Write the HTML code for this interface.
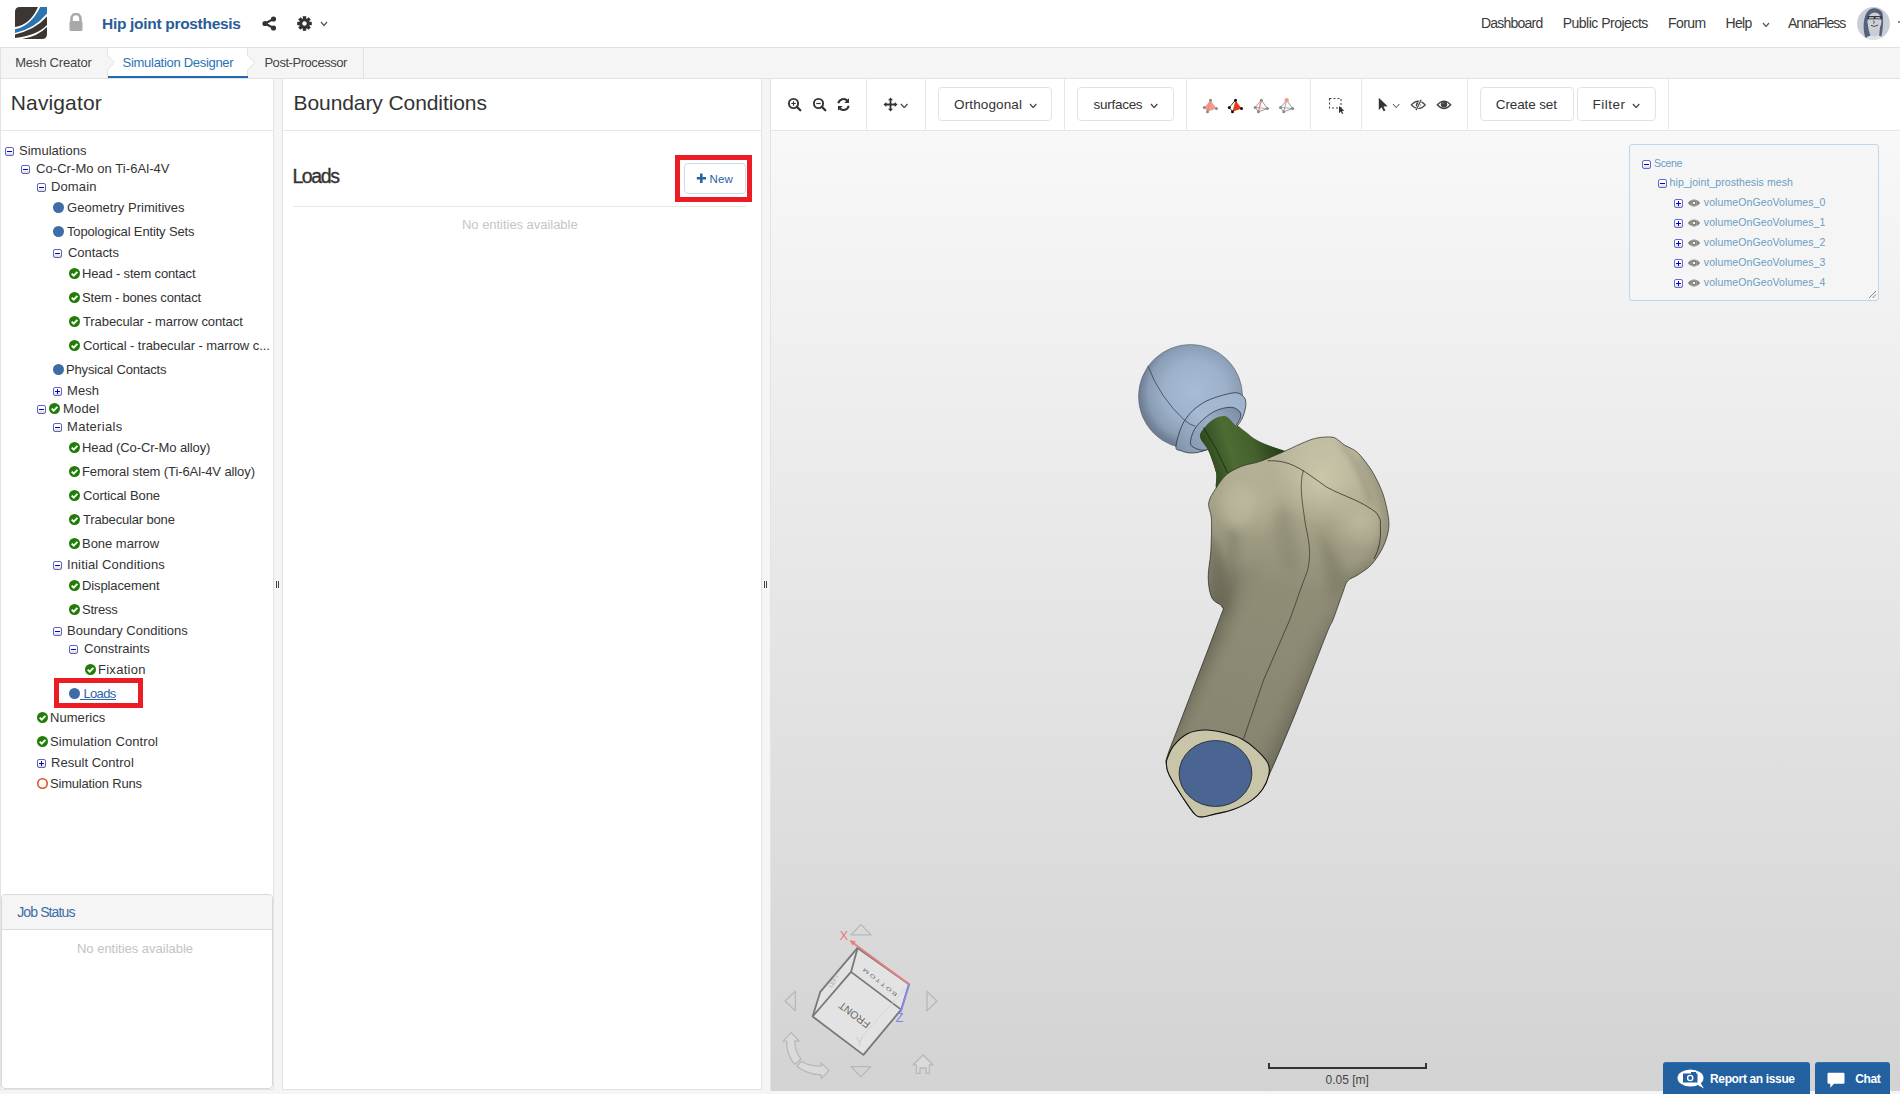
<!DOCTYPE html>
<html><head><meta charset="utf-8"><style>
*{box-sizing:border-box;margin:0;padding:0}
html,body{width:1900px;height:1094px;overflow:hidden;background:#f5f5f5;font-family:"Liberation Sans",sans-serif;color:#333}
.a{position:absolute}
.t{position:absolute;white-space:nowrap;line-height:1}
.tg{position:absolute;width:9px;height:9px;border:1px solid #5e68b2;border-radius:2px;background:linear-gradient(#fff,#fff 45%,#d8d8d8)}
.tg:after{content:"";position:absolute;left:1px;top:3px;width:5px;height:1px;background:#0000d0}
.tg.p:before{content:"";position:absolute;left:3px;top:1px;width:1px;height:5px;background:#0000d0}
.ci{position:absolute;width:11px;height:11px;border-radius:50%;background:#3d6ca6}
.ck{position:absolute;width:11px;height:11px}

</style></head><body>
<div class="a" style="left:0;top:0;width:1900px;height:47px;background:#fff"></div>
<div class="a" style="left:0;top:47px;width:1900px;height:1px;background:#e2e2e2"></div>
<svg class="a" style="left:15px;top:7px" width="32" height="32" viewBox="0 0 32 32">
<path d="M5 0 H32 V27 Q32 32 27 32 H0 V5 Q0 0 5 0 Z" fill="#fff"/>
<path d="M5 0 H23 Q15 18 0 20 V5 Q0 0 5 0 Z" fill="#3b3632"/>
<path d="M25.2 0 H32 V6.5 Q19 22 0 26 V22.2 Q16 19 25.2 0 Z" fill="#2b74b0"/>
<path d="M0 27.4 Q20 23 32 9.6 V18 Q22 28.5 0 31.1 Z" fill="#3b3632"/>
<path d="M7 32 Q22 30 32 20.1 V27 Q32 32 27 32 Z" fill="#3b3632"/>
</svg>
<svg class="a" style="left:68px;top:13px" width="16" height="19" viewBox="0 0 16 19">
<path d="M3.5 8 V5.5 A4.5 4.5 0 0 1 12.5 5.5 V8" fill="none" stroke="#a9a9a9" stroke-width="2.6"/>
<rect x="1.5" y="8" width="13" height="10" rx="1.5" fill="#a9a9a9"/></svg>
<div class="t" style="left:102.00px;top:15.88px;font-size:15.5px;color:#2a5c97;font-weight:700;letter-spacing:-0.305px;">Hip joint prosthesis</div>
<svg class="a" style="left:262px;top:16px" width="15" height="15" viewBox="0 0 15 15">
<line x1="3" y1="7.5" x2="11.5" y2="3" stroke="#333" stroke-width="2"/><line x1="3" y1="7.5" x2="11.5" y2="12" stroke="#333" stroke-width="2"/>
<circle cx="3" cy="7.5" r="2.6" fill="#333"/><circle cx="11.5" cy="3" r="2.6" fill="#333"/><circle cx="11.5" cy="12" r="2.6" fill="#333"/></svg>
<svg class="a" style="left:297px;top:16px" width="15" height="15" viewBox="-7.5 -7.5 15 15">
<g fill="#333"><rect x="-1.7" y="-7.3" width="3.4" height="4" transform="rotate(0)"/><rect x="-1.7" y="-7.3" width="3.4" height="4" transform="rotate(45)"/><rect x="-1.7" y="-7.3" width="3.4" height="4" transform="rotate(90)"/><rect x="-1.7" y="-7.3" width="3.4" height="4" transform="rotate(135)"/><rect x="-1.7" y="-7.3" width="3.4" height="4" transform="rotate(180)"/><rect x="-1.7" y="-7.3" width="3.4" height="4" transform="rotate(225)"/><rect x="-1.7" y="-7.3" width="3.4" height="4" transform="rotate(270)"/><rect x="-1.7" y="-7.3" width="3.4" height="4" transform="rotate(315)"/>
<circle r="5.3"/></g><circle r="2.2" fill="#fff"/></svg>
<svg class="a" style="left:320px;top:21px" width="8" height="5.5" viewBox="-1 -1 8 5.5"><path d="M0 0 L3.0 3.5 L6 0" fill="none" stroke="#555" stroke-width="1.2"/></svg>
<div class="t" style="left:1480.90px;top:15.75px;font-size:14px;color:#3a3a3a;letter-spacing:-0.763px;">Dashboard</div>
<div class="t" style="left:1562.70px;top:15.75px;font-size:14px;color:#3a3a3a;letter-spacing:-0.500px;">Public Projects</div>
<div class="t" style="left:1668.10px;top:15.75px;font-size:14px;color:#3a3a3a;letter-spacing:-0.575px;">Forum</div>
<div class="t" style="left:1725.60px;top:15.75px;font-size:14px;color:#3a3a3a;letter-spacing:-0.733px;">Help</div>
<div class="t" style="left:1788.00px;top:15.75px;font-size:14px;color:#3a3a3a;letter-spacing:-0.975px;">AnnaFless</div>
<svg class="a" style="left:1762px;top:21.5px" width="8" height="5.5" viewBox="-1 -1 8 5.5"><path d="M0 0 L3.0 3.5 L6 0" fill="none" stroke="#555" stroke-width="1.2"/></svg>
<svg class="a" style="left:1857px;top:7px" width="33" height="33" viewBox="0 0 33 33">
<defs><clipPath id="avc"><circle cx="16.5" cy="16.5" r="16.4"/></clipPath>
<filter id="avb"><feGaussianBlur stdDeviation="0.6"/></filter></defs>
<g clip-path="url(#avc)">
<rect width="33" height="33" fill="#c9cdd6"/>
<g filter="url(#avb)">
<path d="M9 33 C5 22 6 8 12 3 C16 0 22 1 25 5 C27 10 26 24 24 31 L22 30 C23 22 24 12 22 7 C17 4 12 7 11 13 C10 20 13 27 15 33 Z" fill="#52627a"/>
<ellipse cx="17.5" cy="14.5" rx="7" ry="9" fill="#d2cfd4"/>
<path d="M10.5 9 H25 V12.3 H10.5 Z" fill="#2e3a4c"/>
<rect x="12" y="10" width="4.6" height="1.5" fill="#b9b5bc"/><rect x="18.6" y="10" width="4.6" height="1.5" fill="#b9b5bc"/>
<path d="M16.5 13.5 L17.3 15.8 L16.2 16.5" stroke="#3a4658" stroke-width="0.9" fill="none"/>
<path d="M14 18.3 Q17.5 20.8 21 18" stroke="#3a4658" stroke-width="1" fill="none"/>
<path d="M8 33 C10 28 14 28 17.5 29.5 C21 28 25 28 27 33 Z" fill="#dfe2e8"/>
</g></g></svg>
<div class="a" style="left:1898px;top:21px;width:2px;height:2px;background:#888"></div>
<div class="a" style="left:0;top:48px;width:1900px;height:30px;background:#f5f5f5"></div>
<div class="a" style="left:0;top:78px;width:1900px;height:1px;background:#e2e2e2"></div>
<div class="a" style="left:0;top:48px;width:1px;height:31px;background:#e2e2e2"></div>
<svg class="a" style="left:0;top:48px" width="380" height="31" viewBox="0 0 380 31">
<path d="M107.5 0 H247.5 V7 L254.5 14.5 L247.5 22 V30 H107.5 V22 L114.5 14.5 L107.5 7 Z" fill="#fff"/>
<path d="M107.5 0 V7 L114.5 14.5 L107.5 22 V30" fill="none" stroke="#e4e4e4" stroke-width="1"/>
<path d="M247.5 0 V7 L254.5 14.5 L247.5 22 V30" fill="none" stroke="#e4e4e4" stroke-width="1"/>
<line x1="363.5" y1="0" x2="363.5" y2="30" stroke="#e2e2e2"/>
<rect x="108" y="28" width="140" height="2" fill="#1f6cb0"/>
</svg>
<div class="t" style="left:15.20px;top:56.00px;font-size:13px;color:#444;letter-spacing:-0.200px;">Mesh Creator</div>
<div class="t" style="left:122.60px;top:56.00px;font-size:13px;color:#2a72b6;letter-spacing:-0.294px;">Simulation Designer</div>
<div class="t" style="left:264.40px;top:56.00px;font-size:13px;color:#444;letter-spacing:-0.454px;">Post-Processor</div>
<div class="a" style="left:0;top:79px;width:274px;height:1011px;background:#fff;border:1px solid #e3e3e3;border-top:none"></div>
<div class="t" style="left:10.80px;top:92.22px;font-size:21px;color:#333;letter-spacing:0.125px;">Navigator</div>
<div class="a" style="left:1px;top:130px;width:272px;height:1px;background:#e6e6e6"></div>
<div class="tg" style="left:5px;top:147px"></div>
<div class="t" style="left:19.00px;top:144.00px;font-size:13px;color:#333;letter-spacing:0.020px;">Simulations</div>
<div class="tg" style="left:21px;top:165px"></div>
<div class="t" style="left:36.00px;top:162.00px;font-size:13px;color:#333;letter-spacing:0.065px;">Co-Cr-Mo on Ti-6Al-4V</div>
<div class="tg" style="left:37px;top:183px"></div>
<div class="t" style="left:51.00px;top:180.00px;font-size:13px;color:#333;letter-spacing:0.120px;">Domain</div>
<div class="ci" style="left:53px;top:202px"></div>
<div class="t" style="left:67.00px;top:201.00px;font-size:13px;color:#333;letter-spacing:0.033px;">Geometry Primitives</div>
<div class="ci" style="left:53px;top:226px"></div>
<div class="t" style="left:67.00px;top:225.00px;font-size:13px;color:#333;letter-spacing:-0.150px;">Topological Entity Sets</div>
<div class="tg" style="left:53px;top:249px"></div>
<div class="t" style="left:68.00px;top:246.00px;font-size:13px;color:#333;letter-spacing:-0.057px;">Contacts</div>
<svg class="ck" style="left:69px;top:268px" width="11" height="11" viewBox="0 0 11 11"><circle cx="5.5" cy="5.5" r="5.5" fill="#1f7d08"/><path d="M2.7 5.6 L4.7 7.6 L8.4 3.8" fill="none" stroke="#fff" stroke-width="1.9"/></svg>
<div class="t" style="left:82.00px;top:267.00px;font-size:13px;color:#333;letter-spacing:-0.156px;">Head - stem contact</div>
<svg class="ck" style="left:69px;top:292px" width="11" height="11" viewBox="0 0 11 11"><circle cx="5.5" cy="5.5" r="5.5" fill="#1f7d08"/><path d="M2.7 5.6 L4.7 7.6 L8.4 3.8" fill="none" stroke="#fff" stroke-width="1.9"/></svg>
<div class="t" style="left:82.00px;top:291.00px;font-size:13px;color:#333;letter-spacing:-0.200px;">Stem - bones contact</div>
<svg class="ck" style="left:69px;top:316px" width="11" height="11" viewBox="0 0 11 11"><circle cx="5.5" cy="5.5" r="5.5" fill="#1f7d08"/><path d="M2.7 5.6 L4.7 7.6 L8.4 3.8" fill="none" stroke="#fff" stroke-width="1.9"/></svg>
<div class="t" style="left:83.00px;top:315.00px;font-size:13px;color:#333;letter-spacing:-0.088px;">Trabecular - marrow contact</div>
<svg class="ck" style="left:69px;top:340px" width="11" height="11" viewBox="0 0 11 11"><circle cx="5.5" cy="5.5" r="5.5" fill="#1f7d08"/><path d="M2.7 5.6 L4.7 7.6 L8.4 3.8" fill="none" stroke="#fff" stroke-width="1.9"/></svg>
<div class="t" style="left:83.00px;top:339.00px;font-size:13px;color:#333;letter-spacing:-0.071px;">Cortical - trabecular - marrow c...</div>
<div class="ci" style="left:53px;top:364px"></div>
<div class="t" style="left:66.00px;top:363.00px;font-size:13px;color:#333;letter-spacing:-0.175px;">Physical Contacts</div>
<div class="tg p" style="left:53px;top:387px"></div>
<div class="t" style="left:67.00px;top:384.00px;font-size:13px;color:#333;letter-spacing:0.067px;">Mesh</div>
<div class="tg" style="left:37px;top:405px"></div>
<svg class="ck" style="left:49px;top:403px" width="11" height="11" viewBox="0 0 11 11"><circle cx="5.5" cy="5.5" r="5.5" fill="#1f7d08"/><path d="M2.7 5.6 L4.7 7.6 L8.4 3.8" fill="none" stroke="#fff" stroke-width="1.9"/></svg>
<div class="t" style="left:63.00px;top:402.00px;font-size:13px;color:#333;letter-spacing:0.175px;">Model</div>
<div class="tg" style="left:53px;top:423px"></div>
<div class="t" style="left:67.00px;top:420.00px;font-size:13px;color:#333;letter-spacing:0.300px;">Materials</div>
<svg class="ck" style="left:69px;top:442px" width="11" height="11" viewBox="0 0 11 11"><circle cx="5.5" cy="5.5" r="5.5" fill="#1f7d08"/><path d="M2.7 5.6 L4.7 7.6 L8.4 3.8" fill="none" stroke="#fff" stroke-width="1.9"/></svg>
<div class="t" style="left:82.00px;top:441.00px;font-size:13px;color:#333;letter-spacing:-0.120px;">Head (Co-Cr-Mo alloy)</div>
<svg class="ck" style="left:69px;top:466px" width="11" height="11" viewBox="0 0 11 11"><circle cx="5.5" cy="5.5" r="5.5" fill="#1f7d08"/><path d="M2.7 5.6 L4.7 7.6 L8.4 3.8" fill="none" stroke="#fff" stroke-width="1.9"/></svg>
<div class="t" style="left:82.00px;top:465.00px;font-size:13px;color:#333;letter-spacing:-0.097px;">Femoral stem (Ti-6Al-4V alloy)</div>
<svg class="ck" style="left:69px;top:490px" width="11" height="11" viewBox="0 0 11 11"><circle cx="5.5" cy="5.5" r="5.5" fill="#1f7d08"/><path d="M2.7 5.6 L4.7 7.6 L8.4 3.8" fill="none" stroke="#fff" stroke-width="1.9"/></svg>
<div class="t" style="left:83.00px;top:489.00px;font-size:13px;color:#333;letter-spacing:-0.083px;">Cortical Bone</div>
<svg class="ck" style="left:69px;top:514px" width="11" height="11" viewBox="0 0 11 11"><circle cx="5.5" cy="5.5" r="5.5" fill="#1f7d08"/><path d="M2.7 5.6 L4.7 7.6 L8.4 3.8" fill="none" stroke="#fff" stroke-width="1.9"/></svg>
<div class="t" style="left:83.00px;top:513.00px;font-size:13px;color:#333;letter-spacing:-0.164px;">Trabecular bone</div>
<svg class="ck" style="left:69px;top:538px" width="11" height="11" viewBox="0 0 11 11"><circle cx="5.5" cy="5.5" r="5.5" fill="#1f7d08"/><path d="M2.7 5.6 L4.7 7.6 L8.4 3.8" fill="none" stroke="#fff" stroke-width="1.9"/></svg>
<div class="t" style="left:82.00px;top:537.00px;font-size:13px;color:#333;letter-spacing:-0.020px;">Bone marrow</div>
<div class="tg" style="left:53px;top:561px"></div>
<div class="t" style="left:67.00px;top:558.00px;font-size:13px;color:#333;letter-spacing:0.141px;">Initial Conditions</div>
<svg class="ck" style="left:69px;top:580px" width="11" height="11" viewBox="0 0 11 11"><circle cx="5.5" cy="5.5" r="5.5" fill="#1f7d08"/><path d="M2.7 5.6 L4.7 7.6 L8.4 3.8" fill="none" stroke="#fff" stroke-width="1.9"/></svg>
<div class="t" style="left:82.00px;top:579.00px;font-size:13px;color:#333;letter-spacing:-0.109px;">Displacement</div>
<svg class="ck" style="left:69px;top:604px" width="11" height="11" viewBox="0 0 11 11"><circle cx="5.5" cy="5.5" r="5.5" fill="#1f7d08"/><path d="M2.7 5.6 L4.7 7.6 L8.4 3.8" fill="none" stroke="#fff" stroke-width="1.9"/></svg>
<div class="t" style="left:82.00px;top:603.00px;font-size:13px;color:#333;letter-spacing:-0.240px;">Stress</div>
<div class="tg" style="left:53px;top:627px"></div>
<div class="t" style="left:67.00px;top:624.00px;font-size:13px;color:#333;letter-spacing:0.006px;">Boundary Conditions</div>
<div class="tg" style="left:69px;top:645px"></div>
<div class="t" style="left:84.00px;top:642.00px;font-size:13px;color:#333;letter-spacing:-0.010px;">Constraints</div>
<svg class="ck" style="left:85px;top:664px" width="11" height="11" viewBox="0 0 11 11"><circle cx="5.5" cy="5.5" r="5.5" fill="#1f7d08"/><path d="M2.7 5.6 L4.7 7.6 L8.4 3.8" fill="none" stroke="#fff" stroke-width="1.9"/></svg>
<div class="t" style="left:98.00px;top:663.00px;font-size:13px;color:#333;letter-spacing:0.271px;">Fixation</div>
<div class="ci" style="left:69px;top:688px"></div>
<div class="t" style="left:83.40px;top:687.00px;font-size:13px;color:#2e62a8;letter-spacing:-0.625px;">Loads</div>
<div class="a" style="left:80px;top:699px;width:36px;height:1px;background:#2e62a8"></div>
<svg class="ck" style="left:37px;top:712px" width="11" height="11" viewBox="0 0 11 11"><circle cx="5.5" cy="5.5" r="5.5" fill="#1f7d08"/><path d="M2.7 5.6 L4.7 7.6 L8.4 3.8" fill="none" stroke="#fff" stroke-width="1.9"/></svg>
<div class="t" style="left:50.00px;top:711.00px;font-size:13px;color:#333;letter-spacing:0.057px;">Numerics</div>
<svg class="ck" style="left:37px;top:736px" width="11" height="11" viewBox="0 0 11 11"><circle cx="5.5" cy="5.5" r="5.5" fill="#1f7d08"/><path d="M2.7 5.6 L4.7 7.6 L8.4 3.8" fill="none" stroke="#fff" stroke-width="1.9"/></svg>
<div class="t" style="left:50.00px;top:735.00px;font-size:13px;color:#333;letter-spacing:0.100px;">Simulation Control</div>
<div class="tg p" style="left:37px;top:759px"></div>
<div class="t" style="left:51.00px;top:756.00px;font-size:13px;color:#333;letter-spacing:0.031px;">Result Control</div>
<svg class="a" style="left:37px;top:778px" width="11" height="11" viewBox="0 0 11 11"><circle cx="5.5" cy="5.5" r="4.7" fill="none" stroke="#d9541e" stroke-width="1.6"/></svg>
<div class="t" style="left:50.00px;top:777.00px;font-size:13px;color:#333;letter-spacing:-0.193px;">Simulation Runs</div>
<div class="a" style="left:54px;top:678px;width:89px;height:30px;border:5px solid #ec1c24"></div>
<div class="a" style="left:276px;top:581px;width:1px;height:7px;background:#444"></div>
<div class="a" style="left:278px;top:581px;width:1px;height:7px;background:#444"></div>
<div class="a" style="left:1px;top:894px;width:272px;height:195px;border:1px solid #dadada;border-radius:4px;background:#fff;overflow:hidden"><div style="height:35px;background:#f5f5f5;border-bottom:1px solid #dadada"></div></div>
<div class="t" style="left:17.20px;top:905.15px;font-size:14px;color:#3b6ea6;letter-spacing:-0.878px;">Job Status</div>
<div class="t" style="left:77.00px;top:942.00px;font-size:13px;color:#c3c3c3;letter-spacing:-0.015px;">No entities available</div>
<div class="a" style="left:282px;top:79px;width:480px;height:1011px;background:#fff;border:1px solid #e3e3e3;border-top:none"></div>
<div class="t" style="left:293.60px;top:91.62px;font-size:21px;color:#333;letter-spacing:-0.089px;">Boundary Conditions</div>
<div class="a" style="left:283px;top:130px;width:478px;height:1px;background:#e6e6e6"></div>
<div class="t" style="left:292.40px;top:167.49px;font-size:19.5px;color:#333;letter-spacing:-1.375px;-webkit-text-stroke:0.35px #333;">Loads</div>
<div class="a" style="left:293px;top:206px;width:453px;height:1px;background:#e8e8e8"></div>
<div class="a" style="left:675px;top:155px;width:77px;height:47px;border:5px solid #ec1c24"></div>
<div class="a" style="left:684px;top:163px;width:62px;height:31px;border:1px solid #c6dcec;border-radius:4px;background:#fff"></div>
<svg class="a" style="left:696px;top:173px" width="11" height="11" viewBox="0 0 11 11"><path d="M5.3 0.5 V10 M0.8 5.2 H10" stroke="#2d62a3" stroke-width="2.6"/></svg>
<div class="t" style="left:709.60px;top:174.27px;font-size:11.5px;color:#2d62a3;letter-spacing:0.150px;">New</div>
<div class="t" style="left:462.00px;top:218.00px;font-size:13px;color:#c6c6c6;letter-spacing:-0.035px;">No entities available</div>
<div class="a" style="left:764px;top:581px;width:1px;height:7px;background:#444"></div>
<div class="a" style="left:766px;top:581px;width:1px;height:7px;background:#444"></div>
<div class="a" style="left:770px;top:79px;width:1130px;height:52px;background:#fff;border-left:1px solid #e3e3e3;border-bottom:1px solid #e6e6e6"></div>
<div class="a" style="left:770px;top:131px;width:1px;height:960px;background:#e3e3e3"></div>
<div class="a" style="left:771px;top:131px;width:1129px;height:960px;background:linear-gradient(#f8f8f8,#d3d3d3)"></div>
<div class="a" style="left:866px;top:79px;width:1px;height:51px;background:#e8e8e8"></div>
<div class="a" style="left:925px;top:79px;width:1px;height:51px;background:#e8e8e8"></div>
<div class="a" style="left:1064px;top:79px;width:1px;height:51px;background:#e8e8e8"></div>
<div class="a" style="left:1186px;top:79px;width:1px;height:51px;background:#e8e8e8"></div>
<div class="a" style="left:1310px;top:79px;width:1px;height:51px;background:#e8e8e8"></div>
<div class="a" style="left:1361px;top:79px;width:1px;height:51px;background:#e8e8e8"></div>
<div class="a" style="left:1467px;top:79px;width:1px;height:51px;background:#e8e8e8"></div>
<div class="a" style="left:1668px;top:79px;width:1px;height:51px;background:#e8e8e8"></div>
<svg class="a" style="left:787px;top:97px" width="16" height="16" viewBox="0 0 16 16">
<circle cx="6.5" cy="6.5" r="4.6" fill="none" stroke="#333" stroke-width="1.9"/><path d="M9.8 9.8 L13.3 13.3" stroke="#333" stroke-width="2.3" stroke-linecap="round"/>
<path d="M4.3 6.5 H8.7 M6.5 4.3 V8.7" stroke="#333" stroke-width="1.2"/></svg>
<svg class="a" style="left:811.5px;top:97px" width="16" height="16" viewBox="0 0 16 16">
<circle cx="6.5" cy="6.5" r="4.6" fill="none" stroke="#333" stroke-width="1.9"/><path d="M9.8 9.8 L13.3 13.3" stroke="#333" stroke-width="2.3" stroke-linecap="round"/>
<path d="M4.3 6.5 H8.7" stroke="#333" stroke-width="1.2"/></svg>
<svg class="a" style="left:836px;top:97px" width="15" height="15" viewBox="0 0 15 15">
<path d="M2.3 6.3 A5.3 5.3 0 0 1 11.6 4" fill="none" stroke="#333" stroke-width="2"/><path d="M13 1.3 V6 H8.3 Z" fill="#333"/>
<path d="M12.7 8.7 A5.3 5.3 0 0 1 3.4 11" fill="none" stroke="#333" stroke-width="2"/><path d="M2 13.7 V9 H6.7 Z" fill="#333"/></svg>
<svg class="a" style="left:883px;top:97px" width="15" height="15" viewBox="0 0 15 15">
<path d="M7.5 2 V13 M2 7.5 H13" stroke="#333" stroke-width="1.8"/>
<path d="M7.5 0.5 L10 3.3 H5 Z M7.5 14.5 L10 11.7 H5 Z M0.5 7.5 L3.3 5 V10 Z M14.5 7.5 L11.7 5 V10 Z" fill="#333"/></svg>
<svg class="a" style="left:900px;top:102.5px" width="8.5" height="5.6" viewBox="-1 -1 8.5 5.6"><path d="M0 0 L3.25 3.6 L6.5 0" fill="none" stroke="#444" stroke-width="1.3"/></svg>
<div class="a" style="left:938px;top:87px;width:114px;height:34px;border:1px solid #e2e2e2;border-radius:4px;background:#fff"></div>
<div class="t" style="left:954.00px;top:97.57px;font-size:13.5px;color:#333;letter-spacing:0.133px;">Orthogonal</div>
<svg class="a" style="left:1029px;top:102.8px" width="8.3" height="5.6" viewBox="-1 -1 8.3 5.6"><path d="M0 0 L3.15 3.6 L6.3 0" fill="none" stroke="#444" stroke-width="1.3"/></svg>
<div class="a" style="left:1077px;top:87px;width:97px;height:34px;border:1px solid #e2e2e2;border-radius:4px;background:#fff"></div>
<div class="t" style="left:1093.60px;top:97.57px;font-size:13.5px;color:#333;letter-spacing:-0.286px;">surfaces</div>
<svg class="a" style="left:1150px;top:102.8px" width="8.3" height="5.6" viewBox="-1 -1 8.3 5.6"><path d="M0 0 L3.15 3.6 L6.3 0" fill="none" stroke="#444" stroke-width="1.3"/></svg>
<div class="a" style="left:1480px;top:87px;width:94px;height:34px;border:1px solid #e2e2e2;border-radius:4px;background:#fff"></div>
<div class="t" style="left:1495.80px;top:97.57px;font-size:13.5px;color:#333;letter-spacing:-0.122px;">Create set</div>
<div class="a" style="left:1577px;top:87px;width:79px;height:34px;border:1px solid #e2e2e2;border-radius:4px;background:#fff"></div>
<div class="t" style="left:1592.40px;top:97.57px;font-size:13.5px;color:#333;letter-spacing:0.520px;">Filter</div>
<svg class="a" style="left:1631.5px;top:102.8px" width="8.3" height="5.6" viewBox="-1 -1 8.3 5.6"><path d="M0 0 L3.15 3.6 L6.3 0" fill="none" stroke="#444" stroke-width="1.3"/></svg>
<svg class="a" style="left:0;top:0;overflow:visible" width="1" height="1"><polygon points="1210.5,100.2 1204.3,107.5 1207.5,111.7 1216.5,108.6" fill="#f29a8e"/><line x1="1210.5" y1="100.2" x2="1207.5" y2="111.7" stroke="#d77" stroke-width="0.6"/><circle cx="1210.5" cy="100.2" r="1.5" fill="#8a8a8a"/><circle cx="1204.3" cy="107.5" r="1.5" fill="#8a8a8a"/><circle cx="1207.5" cy="111.7" r="1.5" fill="#8a8a8a"/><circle cx="1216.5" cy="108.6" r="1.5" fill="#8a8a8a"/></svg>
<svg class="a" style="left:0;top:0;overflow:visible" width="1" height="1"><polygon points="1235.5,100.2 1232.5,111.7 1241.5,108.6" fill="#e8391a"/><polyline points="1235.5,100.2 1229.3,107.5 1232.5,111.7" fill="none" stroke="#111" stroke-width="0.8"/><circle cx="1235.5" cy="100.2" r="1.5" fill="#111"/><circle cx="1229.3" cy="107.5" r="1.5" fill="#111"/><circle cx="1232.5" cy="111.7" r="1.5" fill="#111"/><circle cx="1241.5" cy="108.6" r="1.5" fill="#111"/></svg>
<svg class="a" style="left:0;top:0;overflow:visible" width="1" height="1"><polygon points="1261.4,100.2 1255.2,107.5 1258.4,111.7 1267.4,108.6" fill="none" stroke="#555" stroke-width="0.6"/><line x1="1255.2" y1="107.5" x2="1267.4" y2="108.6" stroke="#555" stroke-width="0.5"/><line x1="1261.4" y1="100.2" x2="1258.4" y2="111.7" stroke="#f08070" stroke-width="1.3"/><circle cx="1261.4" cy="100.2" r="1.5" fill="#8a8a8a"/><circle cx="1255.2" cy="107.5" r="1.5" fill="#8a8a8a"/><circle cx="1258.4" cy="111.7" r="1.5" fill="#8a8a8a"/><circle cx="1267.4" cy="108.6" r="1.5" fill="#8a8a8a"/></svg>
<svg class="a" style="left:0;top:0;overflow:visible" width="1" height="1"><polygon points="1286.7,100.2 1280.5,107.5 1283.7,111.7 1292.7,108.6" fill="none" stroke="#555" stroke-width="0.6"/><line x1="1280.5" y1="107.5" x2="1292.7" y2="108.6" stroke="#555" stroke-width="0.5"/><line x1="1286.7" y1="100.2" x2="1283.7" y2="111.7" stroke="#555" stroke-width="0.5"/><circle cx="1286.7" cy="100.2" r="2.1" fill="#f29a8e"/><circle cx="1280.5" cy="107.5" r="1.5" fill="#8a8a8a"/><circle cx="1283.7" cy="111.7" r="1.5" fill="#8a8a8a"/><circle cx="1292.7" cy="108.6" r="1.5" fill="#8a8a8a"/></svg>
<svg class="a" style="left:1328px;top:97px" width="18" height="18" viewBox="0 0 18 18">
<rect x="1.5" y="1.5" width="11.5" height="9.5" fill="none" stroke="#444" stroke-width="1.1" stroke-dasharray="2 2"/>
<path d="M11 9 L11 16.3 L12.8 14.6 L14 17 L15.2 16.4 L14 14 L16.4 13.8 Z" fill="#333"/></svg>
<svg class="a" style="left:1378px;top:97px" width="11" height="15" viewBox="0 0 11 15">
<path d="M0.8 0.8 L0.8 13 L3.6 10.3 L5.6 14.3 L7.4 13.4 L5.4 9.5 L9.6 9.3 Z" fill="#333"/></svg>
<svg class="a" style="left:1392px;top:102.8px" width="8.3" height="5.6" viewBox="-1 -1 8.3 5.6"><path d="M0 0 L3.15 3.6 L6.3 0" fill="none" stroke="#444" stroke-width="1.0"/></svg>
<svg class="a" style="left:1410px;top:99px" width="17" height="12" viewBox="0 0 17 12">
<path d="M1.3 5.8 Q8.3 -1.6 15.3 5.8 Q8.3 13.2 1.3 5.8 Z" fill="none" stroke="#444" stroke-width="1.2"/>
<path d="M8.6 3 A3 3 0 0 0 7.2 8.6 Z" fill="#444"/>
<path d="M9.6 7.2 A2 2 0 0 0 10.6 5.4" fill="none" stroke="#444" stroke-width="0.8"/>
<path d="M6.2 11 L11.2 0.8" stroke="#fff" stroke-width="2.4"/><path d="M6 11.2 L11.2 0.8" stroke="#444" stroke-width="1.2"/></svg>
<svg class="a" style="left:1436px;top:99px" width="16" height="12" viewBox="0 0 16 12">
<path d="M1.3 5.8 Q8 -1.6 14.7 5.8 Q8 13.2 1.3 5.8 Z" fill="none" stroke="#444" stroke-width="1.3"/>
<circle cx="8" cy="5.3" r="3.2" fill="#444"/><circle cx="7" cy="4.3" r="0.8" fill="#888"/></svg>
<div class="a" style="left:1629px;top:144px;width:250px;height:157px;border:1px solid #bcd8ea;border-radius:3px;background:rgba(245,245,245,0.9)"></div>
<svg class="a" style="left:1868px;top:290px" width="9" height="9" viewBox="0 0 9 9"><path d="M1 8 L8 1 M4.5 8 L8 4.5" stroke="#777" stroke-width="0.9"/></svg>
<div class="tg" style="left:1642px;top:160px;border-color:#6a6ac8"></div>
<div class="t" style="left:1654.00px;top:157.51px;font-size:10.5px;color:#6a9dc4;letter-spacing:-0.350px;">Scene</div>
<div class="tg" style="left:1658px;top:179px;border-color:#6a6ac8"></div>
<div class="t" style="left:1669.60px;top:176.51px;font-size:10.5px;color:#6a9dc4;letter-spacing:0.075px;">hip_joint_prosthesis mesh</div>
<div class="tg p" style="left:1674px;top:199px;border-color:#6a6ac8"></div>
<svg class="a" style="left:1688px;top:199px" width="12" height="8" viewBox="0 0 12 8"><path d="M0 4 C3 -0.6 9 -0.6 12 4 C9 8.6 3 8.6 0 4 Z" fill="#7a7a74"/><circle cx="6" cy="4" r="3.2" fill="none" stroke="#cfcfcf" stroke-width="0.6"/><circle cx="6" cy="4" r="1.3" fill="#f4f4f4"/></svg>
<div class="t" style="left:1703.80px;top:196.81px;font-size:10.5px;color:#6a9dc4;letter-spacing:0.100px;">volumeOnGeoVolumes_0</div>
<div class="tg p" style="left:1674px;top:219px;border-color:#6a6ac8"></div>
<svg class="a" style="left:1688px;top:219px" width="12" height="8" viewBox="0 0 12 8"><path d="M0 4 C3 -0.6 9 -0.6 12 4 C9 8.6 3 8.6 0 4 Z" fill="#7a7a74"/><circle cx="6" cy="4" r="3.2" fill="none" stroke="#cfcfcf" stroke-width="0.6"/><circle cx="6" cy="4" r="1.3" fill="#f4f4f4"/></svg>
<div class="t" style="left:1703.80px;top:216.81px;font-size:10.5px;color:#6a9dc4;letter-spacing:0.100px;">volumeOnGeoVolumes_1</div>
<div class="tg p" style="left:1674px;top:239px;border-color:#6a6ac8"></div>
<svg class="a" style="left:1688px;top:239px" width="12" height="8" viewBox="0 0 12 8"><path d="M0 4 C3 -0.6 9 -0.6 12 4 C9 8.6 3 8.6 0 4 Z" fill="#7a7a74"/><circle cx="6" cy="4" r="3.2" fill="none" stroke="#cfcfcf" stroke-width="0.6"/><circle cx="6" cy="4" r="1.3" fill="#f4f4f4"/></svg>
<div class="t" style="left:1703.80px;top:236.81px;font-size:10.5px;color:#6a9dc4;letter-spacing:0.100px;">volumeOnGeoVolumes_2</div>
<div class="tg p" style="left:1674px;top:259px;border-color:#6a6ac8"></div>
<svg class="a" style="left:1688px;top:259px" width="12" height="8" viewBox="0 0 12 8"><path d="M0 4 C3 -0.6 9 -0.6 12 4 C9 8.6 3 8.6 0 4 Z" fill="#7a7a74"/><circle cx="6" cy="4" r="3.2" fill="none" stroke="#cfcfcf" stroke-width="0.6"/><circle cx="6" cy="4" r="1.3" fill="#f4f4f4"/></svg>
<div class="t" style="left:1703.80px;top:256.81px;font-size:10.5px;color:#6a9dc4;letter-spacing:0.100px;">volumeOnGeoVolumes_3</div>
<div class="tg p" style="left:1674px;top:279px;border-color:#6a6ac8"></div>
<svg class="a" style="left:1688px;top:279px" width="12" height="8" viewBox="0 0 12 8"><path d="M0 4 C3 -0.6 9 -0.6 12 4 C9 8.6 3 8.6 0 4 Z" fill="#7a7a74"/><circle cx="6" cy="4" r="3.2" fill="none" stroke="#cfcfcf" stroke-width="0.6"/><circle cx="6" cy="4" r="1.3" fill="#f4f4f4"/></svg>
<div class="t" style="left:1703.80px;top:276.81px;font-size:10.5px;color:#6a9dc4;letter-spacing:0.100px;">volumeOnGeoVolumes_4</div>
<div class="a" style="left:1268px;top:1067px;width:159px;height:2px;background:#333"></div>
<div class="a" style="left:1268px;top:1063px;width:2px;height:6px;background:#333"></div>
<div class="a" style="left:1425px;top:1063px;width:2px;height:6px;background:#333"></div>
<div class="t" style="left:1325.60px;top:1074.44px;font-size:12px;color:#444;">0.05 [m]</div>
<div class="a" style="left:770px;top:1091px;width:1130px;height:3px;background:#f5f5f5"></div>
<div class="a" style="left:1663px;top:1062px;width:147px;height:32px;background:#22609f;border-radius:3px 3px 0 0;border-top:1px solid #2b70bf"></div>
<div class="a" style="left:1815px;top:1062px;width:75px;height:32px;background:#22609f;border-radius:3px 3px 0 0;border-top:1px solid #2b70bf"></div>
<svg class="a" style="left:1677px;top:1069px" width="29" height="20" viewBox="0 0 29 20">
<ellipse cx="13.5" cy="9" rx="13" ry="8.6" fill="#fff"/><path d="M19 15 L27 19.5 L23 13 Z" fill="#fff"/>
<rect x="6" y="4.5" width="14.5" height="9" fill="#22609f"/><rect x="14" y="3" width="5" height="2" fill="#22609f"/>
<circle cx="13.2" cy="9" r="2.6" fill="none" stroke="#fff" stroke-width="1.4"/></svg>
<div class="t" style="left:1710.00px;top:1073.24px;font-size:12px;color:#fff;font-weight:700;letter-spacing:-0.357px;">Report an issue</div>
<svg class="a" style="left:1827px;top:1072px" width="19" height="17" viewBox="0 0 19 17">
<path d="M1.5 0.8 H16.3 Q17.5 0.8 17.5 2 V10.5 Q17.5 11.7 16.3 11.7 H7 L3.3 15.8 V11.7 H1.5 Q0.5 11.7 0.5 10.5 V2 Q0.5 0.8 1.5 0.8 Z" fill="#fff"/></svg>
<div class="t" style="left:1855.20px;top:1073.24px;font-size:12px;color:#fff;font-weight:700;letter-spacing:-0.367px;">Chat</div>
<svg class="a" style="left:1120px;top:320px" width="290" height="510" viewBox="1120 320 290 510">
<defs>
<radialGradient id="sph" cx="1195" cy="392" r="55" gradientUnits="userSpaceOnUse">
<stop offset="0" stop-color="#a6bbd6"/><stop offset="0.55" stop-color="#9db1cb"/><stop offset="0.85" stop-color="#8a9db5"/><stop offset="1" stop-color="#6f8096"/></radialGradient>
<linearGradient id="neckg" x1="1205" y1="450" x2="1270" y2="430" gradientUnits="userSpaceOnUse">
<stop offset="0" stop-color="#2f4a1f"/><stop offset="0.35" stop-color="#4d6c33"/><stop offset="0.7" stop-color="#44602c"/><stop offset="1" stop-color="#2c421c"/></linearGradient>
<linearGradient id="boneg" x1="1300" y1="440" x2="1230" y2="760" gradientUnits="userSpaceOnUse">
<stop offset="0" stop-color="#bfbba0"/><stop offset="0.2" stop-color="#aaa68c"/><stop offset="0.45" stop-color="#8f8d76"/><stop offset="1" stop-color="#878570"/></linearGradient>
<filter id="bl4" filterUnits="userSpaceOnUse" x="1120" y="320" width="290" height="510"><feGaussianBlur stdDeviation="5"/></filter>
<filter id="bl3" filterUnits="userSpaceOnUse" x="1120" y="320" width="290" height="510"><feGaussianBlur stdDeviation="3"/></filter>
<linearGradient id="shaftside" x1="1186" y1="690" x2="1292" y2="739" gradientUnits="userSpaceOnUse">
<stop offset="0" stop-color="#5a584a" stop-opacity="0.75"/><stop offset="0.2" stop-color="#7d7b66" stop-opacity="0"/><stop offset="0.7" stop-color="#8d8b75" stop-opacity="0"/><stop offset="1" stop-color="#5a584a" stop-opacity="0.8"/></linearGradient>
<linearGradient id="collar" x1="1178" y1="448" x2="1240" y2="396" gradientUnits="userSpaceOnUse"><stop offset="0" stop-color="#8094ac"/><stop offset="0.45" stop-color="#a6bad3"/><stop offset="1" stop-color="#9fb3cc"/></linearGradient>
<linearGradient id="recess" x1="1195" y1="447" x2="1238" y2="410" gradientUnits="userSpaceOnUse"><stop offset="0" stop-color="#8a9db5"/><stop offset="0.5" stop-color="#9aaec7"/><stop offset="1" stop-color="#7b8ea6"/></linearGradient>
<radialGradient id="hl1" cx="1322" cy="478" r="48" gradientUnits="userSpaceOnUse"><stop offset="0" stop-color="#cdc9ad" stop-opacity="0.9"/><stop offset="1" stop-color="#cdc9ad" stop-opacity="0"/></radialGradient>
<radialGradient id="hl2" cx="1250" cy="500" r="40" gradientUnits="userSpaceOnUse"><stop offset="0" stop-color="#bbb79c" stop-opacity="0.8"/><stop offset="1" stop-color="#bbb79c" stop-opacity="0"/></radialGradient>
<radialGradient id="hl3" cx="1360" cy="520" r="30" gradientUnits="userSpaceOnUse"><stop offset="0" stop-color="#c0bca1" stop-opacity="0.8"/><stop offset="1" stop-color="#c0bca1" stop-opacity="0"/></radialGradient>
<clipPath id="sclip"><path d="M1225,560 L1345,590 L1269,776 L1160,760 Z"/></clipPath>
<linearGradient id="sfade" x1="0" y1="560" x2="0" y2="640" gradientUnits="userSpaceOnUse"><stop offset="0" stop-color="#fff" stop-opacity="0"/><stop offset="1" stop-color="#fff" stop-opacity="1"/></linearGradient>
<mask id="smask" maskUnits="userSpaceOnUse" x="1120" y="320" width="290" height="510"><rect x="1120" y="320" width="290" height="510" fill="url(#sfade)"/></mask>
<clipPath id="bclip"><path d="M1208.7,502.9 C1209.5,497.6 1213.0,492.9 1216.0,488.2 C1219.0,483.5 1222.2,478.2 1226.6,474.5 C1231.0,470.8 1236.8,468.2 1242.4,466.0 C1248.0,463.8 1253.3,463.8 1260.3,461.3 C1267.3,458.9 1277.8,454.2 1284.5,451.3 C1291.2,448.4 1295.0,446.2 1300.3,444.0 C1305.5,441.8 1310.8,439.3 1316.0,438.2 C1321.2,437.1 1327.9,436.7 1331.8,437.1 C1335.7,437.5 1337.1,439.5 1339.2,440.8 C1341.3,442.1 1341.7,443.2 1344.5,445.0 C1347.3,446.8 1352.5,448.5 1356.0,451.3 C1359.5,454.1 1362.5,457.9 1365.5,461.8 C1368.5,465.7 1371.2,469.4 1374.0,474.5 C1376.8,479.6 1380.1,486.1 1382.4,492.4 C1384.7,498.7 1386.5,506.4 1387.6,512.4 C1388.6,518.4 1389.4,522.8 1388.7,528.4 C1388.0,534.0 1386.2,540.3 1383.4,546.3 C1380.6,552.3 1376.0,559.5 1371.8,564.2 C1367.6,568.9 1362.2,571.9 1358.2,574.7 C1354.2,577.5 1350.2,577.8 1347.6,581.0 C1345.0,584.2 1344.9,587.2 1342.4,593.7 C1340.0,600.2 1335.5,613.4 1332.9,620.0 C1330.3,626.6 1332.7,618.7 1326.7,633.6 C1320.7,648.5 1304.8,690.0 1297.0,709.4 C1289.2,728.8 1284.6,739.3 1280.0,750.2 C1275.4,761.1 1272.1,768.2 1269.2,774.8 C1266.3,781.3 1265.4,785.2 1262.4,789.5 C1259.4,793.8 1256.3,797.0 1251.4,800.4 C1246.5,803.8 1239.2,807.3 1233.1,809.6 C1227.0,811.9 1220.0,812.9 1214.8,814.1 C1209.6,815.3 1205.3,816.9 1202.0,816.9 C1198.7,816.9 1197.9,817.3 1194.7,814.1 C1191.5,810.9 1187.2,804.2 1182.9,797.7 C1178.6,791.2 1171.8,780.4 1169.1,774.8 C1166.3,769.2 1166.7,767.0 1166.4,763.9 C1166.1,760.8 1164.9,763.3 1167.3,756.0 C1169.7,748.7 1172.3,742.7 1181.0,720.0 C1189.7,697.3 1212.3,638.8 1219.2,620.0 C1226.1,601.2 1223.6,611.1 1222.4,607.4 C1221.2,603.7 1214.4,602.9 1212.0,598.0 C1209.6,593.1 1208.4,585.6 1208.2,577.9 C1208.0,570.2 1210.2,561.2 1210.8,551.6 C1211.3,542.0 1211.8,528.1 1211.5,520.0 C1211.2,511.9 1208.0,508.2 1208.7,502.9 Z"/></clipPath>
</defs>
<path d="M1200.3,433.0 C1200.9,437.6 1206.1,444.7 1208.7,451.3 C1211.3,457.9 1214.1,465.6 1216.0,472.4 C1217.9,479.2 1212.3,491.4 1220.0,492.0 C1227.7,492.6 1250.0,481.7 1262.0,476.0 C1274.0,470.3 1292.6,463.9 1292.0,458.0 C1291.4,452.1 1265.9,445.1 1258.2,440.8 C1250.5,436.5 1249.5,434.6 1246.0,432.0 C1242.5,429.4 1241.0,428.0 1237.0,425.0 C1233.0,422.0 1227.3,414.2 1222.0,414.0 C1216.7,413.8 1208.6,420.8 1205.0,424.0 C1201.4,427.2 1199.7,428.4 1200.3,433.0 Z" fill="url(#neckg)"/>
<path d="M1203.4,427 Q1218,450 1227.6,473" fill="none" stroke="#1a2412" stroke-width="0.7"/>
<circle cx="1190.5" cy="396.5" r="52" fill="url(#sph)" stroke="#55606e" stroke-width="0.6"/>
<path d="M1176.0,446.0 C1176.6,440.9 1180.1,427.6 1184.7,420.4 C1189.3,413.1 1195.8,407.1 1203.7,402.5 C1211.6,397.9 1225.7,394.1 1232.2,393.0 C1238.7,391.9 1240.6,394.2 1242.9,396.0 C1245.2,397.8 1245.9,400.2 1245.9,403.7 C1245.9,407.2 1244.4,413.0 1242.9,416.8 C1241.4,420.6 1240.0,422.4 1237.0,426.3 C1234.0,430.2 1230.2,436.1 1225.0,440.0 C1219.8,443.9 1211.5,447.8 1206.0,450.0 C1200.5,452.2 1196.0,452.9 1191.8,453.0 C1187.6,453.1 1183.6,451.9 1181.0,450.7 C1178.4,449.5 1175.4,451.1 1176.0,446.0 Z" fill="url(#collar)" stroke="#222" stroke-width="0.7"/>
<path d="M1190.6,440.6 C1191.2,437.2 1192.7,431.1 1196.5,426.3 C1200.3,421.5 1207.5,415.2 1213.2,412.0 C1219.0,408.8 1226.5,407.1 1231.0,407.3 C1235.5,407.5 1239.5,410.4 1240.5,413.2 C1241.5,416.0 1240.1,419.5 1237.0,424.0 C1233.9,428.5 1227.2,435.7 1222.0,440.0 C1216.8,444.3 1210.8,448.8 1206.0,450.0 C1201.2,451.2 1195.6,448.6 1193.0,447.0 C1190.4,445.4 1190.0,444.1 1190.6,440.6 Z" fill="url(#recess)" stroke="#222" stroke-width="0.7"/>
<path d="M1147.8,365.7 Q1160,398 1184.7,420.4 Q1190,425 1195.4,426.3" fill="none" stroke="#222" stroke-width="0.6"/>
<path d="M1200.0,437.0 C1199.4,432.9 1202.7,430.0 1205.0,427.0 C1207.3,424.0 1210.8,420.8 1214.0,419.0 C1217.2,417.2 1221.3,415.9 1224.0,416.0 C1226.7,416.1 1227.7,417.5 1230.0,419.5 C1232.3,421.5 1234.7,425.1 1238.0,428.0 C1241.3,430.9 1246.0,434.3 1250.0,437.0 C1254.0,439.7 1255.3,441.0 1262.0,444.0 C1268.7,447.0 1290.0,449.7 1290.0,455.0 C1290.0,460.3 1273.7,469.8 1262.0,476.0 C1250.3,482.2 1227.7,492.6 1220.0,492.0 C1212.3,491.4 1217.9,479.2 1216.0,472.4 C1214.1,465.6 1211.4,457.2 1208.7,451.3 C1206.0,445.4 1200.6,441.1 1200.0,437.0 Z" fill="url(#neckg)"/>
<path d="M1203.5,427.5 Q1218,450 1227.6,473" fill="none" stroke="#1a2412" stroke-width="0.8"/>
<path d="M1208.7,502.9 C1209.5,497.6 1213.0,492.9 1216.0,488.2 C1219.0,483.5 1222.2,478.2 1226.6,474.5 C1231.0,470.8 1236.8,468.2 1242.4,466.0 C1248.0,463.8 1253.3,463.8 1260.3,461.3 C1267.3,458.9 1277.8,454.2 1284.5,451.3 C1291.2,448.4 1295.0,446.2 1300.3,444.0 C1305.5,441.8 1310.8,439.3 1316.0,438.2 C1321.2,437.1 1327.9,436.7 1331.8,437.1 C1335.7,437.5 1337.1,439.5 1339.2,440.8 C1341.3,442.1 1341.7,443.2 1344.5,445.0 C1347.3,446.8 1352.5,448.5 1356.0,451.3 C1359.5,454.1 1362.5,457.9 1365.5,461.8 C1368.5,465.7 1371.2,469.4 1374.0,474.5 C1376.8,479.6 1380.1,486.1 1382.4,492.4 C1384.7,498.7 1386.5,506.4 1387.6,512.4 C1388.6,518.4 1389.4,522.8 1388.7,528.4 C1388.0,534.0 1386.2,540.3 1383.4,546.3 C1380.6,552.3 1376.0,559.5 1371.8,564.2 C1367.6,568.9 1362.2,571.9 1358.2,574.7 C1354.2,577.5 1350.2,577.8 1347.6,581.0 C1345.0,584.2 1344.9,587.2 1342.4,593.7 C1340.0,600.2 1335.5,613.4 1332.9,620.0 C1330.3,626.6 1332.7,618.7 1326.7,633.6 C1320.7,648.5 1304.8,690.0 1297.0,709.4 C1289.2,728.8 1284.6,739.3 1280.0,750.2 C1275.4,761.1 1272.1,768.2 1269.2,774.8 C1266.3,781.3 1265.4,785.2 1262.4,789.5 C1259.4,793.8 1256.3,797.0 1251.4,800.4 C1246.5,803.8 1239.2,807.3 1233.1,809.6 C1227.0,811.9 1220.0,812.9 1214.8,814.1 C1209.6,815.3 1205.3,816.9 1202.0,816.9 C1198.7,816.9 1197.9,817.3 1194.7,814.1 C1191.5,810.9 1187.2,804.2 1182.9,797.7 C1178.6,791.2 1171.8,780.4 1169.1,774.8 C1166.3,769.2 1166.7,767.0 1166.4,763.9 C1166.1,760.8 1164.9,763.3 1167.3,756.0 C1169.7,748.7 1172.3,742.7 1181.0,720.0 C1189.7,697.3 1212.3,638.8 1219.2,620.0 C1226.1,601.2 1223.6,611.1 1222.4,607.4 C1221.2,603.7 1214.4,602.9 1212.0,598.0 C1209.6,593.1 1208.4,585.6 1208.2,577.9 C1208.0,570.2 1210.2,561.2 1210.8,551.6 C1211.3,542.0 1211.8,528.1 1211.5,520.0 C1211.2,511.9 1208.0,508.2 1208.7,502.9 Z" fill="url(#boneg)"/>
<g clip-path="url(#bclip)">
<rect x="1120" y="430" width="290" height="400" fill="url(#hl1)"/>
<rect x="1120" y="430" width="290" height="400" fill="url(#hl2)"/>
<rect x="1120" y="430" width="290" height="400" fill="url(#hl3)"/>
<rect x="1120" y="430" width="290" height="400" fill="url(#shaftside)" mask="url(#smask)"/>
<path d="M1205,530 Q1236,560 1226,612 L1212,612 L1205,530 Z" fill="#5f5d4c" opacity="0.5" filter="url(#bl4)"/>
<path d="M1350,585 Q1335,545 1318,530 L1330,600 Z" fill="#6f6d59" opacity="0.4" filter="url(#bl4)"/>
<ellipse cx="1286" cy="540" rx="10" ry="34" transform="rotate(-10 1286 540)" fill="#7f7d68" opacity="0.35" filter="url(#bl4)"/>
<path d="M1362,455 Q1392,500 1386,540 Q1375,565 1350,582" fill="none" stroke="#6f6d5a" stroke-width="9" opacity="0.45" filter="url(#bl4)"/>
<path d="M1232,530 Q1236,575 1224,612" fill="none" stroke="#6a6855" stroke-width="6" opacity="0.5" filter="url(#bl4)"/>
<ellipse cx="1238" cy="505" rx="16" ry="22" fill="#c0bca2" opacity="0.5" filter="url(#bl4)"/>
<path d="M1341,442 Q1360,465 1372,505" fill="none" stroke="#8a8873" stroke-width="5" opacity="0.55" filter="url(#bl3)"/>
</g>
<path d="M1208.7,502.9 C1209.5,497.6 1213.0,492.9 1216.0,488.2 C1219.0,483.5 1222.2,478.2 1226.6,474.5 C1231.0,470.8 1236.8,468.2 1242.4,466.0 C1248.0,463.8 1253.3,463.8 1260.3,461.3 C1267.3,458.9 1277.8,454.2 1284.5,451.3 C1291.2,448.4 1295.0,446.2 1300.3,444.0 C1305.5,441.8 1310.8,439.3 1316.0,438.2 C1321.2,437.1 1327.9,436.7 1331.8,437.1 C1335.7,437.5 1337.1,439.5 1339.2,440.8 C1341.3,442.1 1341.7,443.2 1344.5,445.0 C1347.3,446.8 1352.5,448.5 1356.0,451.3 C1359.5,454.1 1362.5,457.9 1365.5,461.8 C1368.5,465.7 1371.2,469.4 1374.0,474.5 C1376.8,479.6 1380.1,486.1 1382.4,492.4 C1384.7,498.7 1386.5,506.4 1387.6,512.4 C1388.6,518.4 1389.4,522.8 1388.7,528.4 C1388.0,534.0 1386.2,540.3 1383.4,546.3 C1380.6,552.3 1376.0,559.5 1371.8,564.2 C1367.6,568.9 1362.2,571.9 1358.2,574.7 C1354.2,577.5 1350.2,577.8 1347.6,581.0 C1345.0,584.2 1344.9,587.2 1342.4,593.7 C1340.0,600.2 1335.5,613.4 1332.9,620.0 C1330.3,626.6 1332.7,618.7 1326.7,633.6 C1320.7,648.5 1304.8,690.0 1297.0,709.4 C1289.2,728.8 1284.6,739.3 1280.0,750.2 C1275.4,761.1 1272.1,768.2 1269.2,774.8 C1266.3,781.3 1265.4,785.2 1262.4,789.5 C1259.4,793.8 1256.3,797.0 1251.4,800.4 C1246.5,803.8 1239.2,807.3 1233.1,809.6 C1227.0,811.9 1220.0,812.9 1214.8,814.1 C1209.6,815.3 1205.3,816.9 1202.0,816.9 C1198.7,816.9 1197.9,817.3 1194.7,814.1 C1191.5,810.9 1187.2,804.2 1182.9,797.7 C1178.6,791.2 1171.8,780.4 1169.1,774.8 C1166.3,769.2 1166.7,767.0 1166.4,763.9 C1166.1,760.8 1164.9,763.3 1167.3,756.0 C1169.7,748.7 1172.3,742.7 1181.0,720.0 C1189.7,697.3 1212.3,638.8 1219.2,620.0 C1226.1,601.2 1223.6,611.1 1222.4,607.4 C1221.2,603.7 1214.4,602.9 1212.0,598.0 C1209.6,593.1 1208.4,585.6 1208.2,577.9 C1208.0,570.2 1210.2,561.2 1210.8,551.6 C1211.3,542.0 1211.8,528.1 1211.5,520.0 C1211.2,511.9 1208.0,508.2 1208.7,502.9 Z" fill="none" stroke="#2a2a22" stroke-width="0.7"/>
<path d="M1267.6,460.8 C1290,460 1300,468 1326.6,487.1 C1345,497 1360,500 1376,512.4 Q1382,520 1380.3,525 Q1382,545 1373.9,559" fill="none" stroke="#1e1e18" stroke-width="0.7"/>
<path d="M1303.4,470.3 C1299,485 1302,500 1305.5,525 C1310,545 1311,555 1307.6,570.5 C1300,590 1297,600 1289.7,620 L1263.6,680 L1243.6,738.8" fill="none" stroke="#1e1e18" stroke-width="0.6"/>
<path d="M1167.3,758.4 C1168.5,755.4 1170.3,749.7 1173.7,745.6 C1177.1,741.5 1182.1,736.3 1187.4,733.7 C1192.7,731.1 1199.6,730.1 1205.7,730.0 C1211.8,729.9 1217.9,731.3 1224.0,732.8 C1230.1,734.3 1237.0,736.5 1242.3,739.2 C1247.6,742.0 1251.7,745.3 1256.0,749.3 C1260.3,753.3 1265.8,758.8 1267.9,763.0 C1270.0,767.2 1269.7,770.4 1268.8,774.8 C1267.9,779.2 1265.3,785.2 1262.4,789.5 C1259.5,793.8 1256.3,797.0 1251.4,800.4 C1246.5,803.8 1239.2,807.3 1233.1,809.6 C1227.0,811.9 1220.0,812.9 1214.8,814.1 C1209.6,815.3 1205.3,816.9 1202.0,816.9 C1198.7,816.9 1197.9,817.3 1194.7,814.1 C1191.5,810.9 1187.2,804.2 1182.9,797.7 C1178.6,791.2 1171.8,780.4 1169.1,774.8 C1166.3,769.2 1166.7,766.6 1166.4,763.9 C1166.1,761.2 1166.1,761.4 1167.3,758.4 Z" fill="#c9c5a9" stroke="#111" stroke-width="1.1"/>
<ellipse cx="1215.5" cy="773.5" rx="36.4" ry="33" fill="#4a6591" stroke="#111" stroke-width="0.7"/>
</svg>
<svg class="a" style="left:775px;top:915px" width="175" height="175" viewBox="775 915 175 175">
<g fill="#e3e3e3" stroke="none">
<polygon points="857.6,947.9 909,984.3 901.2,1009.6 863.4,1054.9 812.6,1016.5 820.3,991.8"/></g>
<g fill="none" stroke="#787878" stroke-width="1.8" stroke-linejoin="round">
<polygon points="857.6,947.9 909,984.3 901.2,1009.6 863.4,1054.9 812.6,1016.5 820.3,991.8"/>
<polyline points="857.6,947.9 851,971.9 901.2,1009.6"/><line x1="851" y1="971.9" x2="812.6" y2="1016.5"/>
</g>
<line x1="909" y1="984.3" x2="850.5" y2="941" stroke="#e88080" stroke-width="1.8"/>
<path d="M849.5,940 L856,941.5 L852.5,945.5 Z" fill="#e88080"/>
<text x="844" y="939.5" font-size="12.5" fill="#e87878" font-family="Liberation Sans" text-anchor="middle">X</text>
<line x1="909" y1="984.3" x2="900.8" y2="1012" stroke="#8888ee" stroke-width="1.8"/>
<text x="0" y="0" font-size="12.5" fill="#7f7fe8" font-family="Liberation Sans" text-anchor="middle" transform="translate(899.5,1022)">Z</text>
<line x1="906.5" y1="987.5" x2="861" y2="1037.5" stroke="#c9dcc4" stroke-width="0.9"/>
<text x="0" y="0" font-size="12.5" fill="#c4d8bf" font-family="Liberation Sans" text-anchor="middle" transform="translate(859.5,1046)">Y</text>
<text x="0" y="0" font-size="10.5" fill="#666" font-family="Liberation Sans" text-anchor="middle" transform="translate(856.5,1012) rotate(217)">FRONT</text>
<text x="0" y="0" font-size="8" fill="#6a6a6a" font-family="Liberation Sans" text-anchor="middle" letter-spacing="1.6" transform="translate(880.5,980.5) rotate(218.3) scale(1,0.6)">BOTTOM</text>
<text x="0" y="0" font-size="6" fill="#aaa" font-family="Liberation Sans" text-anchor="middle" transform="translate(835.5,982) rotate(-60)">LEFT</text>
<g fill="none" stroke="#b8b8b8" stroke-width="1.3" stroke-linejoin="round">
<polygon points="850.9,934.9 871.1,934.9 861,924.6"/>
<polygon points="851.1,1066.6 870.7,1066.6 860.9,1076.9"/>
<polygon points="795.4,991.2 795.4,1010.9 785,1001"/>
<polygon points="927,991.2 927,1010.9 936.9,1001"/>
<path d="M923.1,1055 L913.2,1064.8 H916.4 V1073.3 H920 V1068 H926.2 V1073.3 H929.4 V1064.8 H933 Z" fill="#dadada"/>
<path d="M791.1,1032.6 L783.1,1041.1 H786.6 Q786.5,1055 794.7,1064.4 L801,1059 Q795,1052 794.7,1041.1 H799.2 Z" fill="#dadada"/>
<path d="M829.1,1070.6 L821.1,1063 V1066.2 Q808,1066 801.4,1061.2 L797,1066.2 Q806,1074 821.1,1074.8 V1078.7 Z" fill="#dadada"/>
</g>
</svg>
</body></html>
